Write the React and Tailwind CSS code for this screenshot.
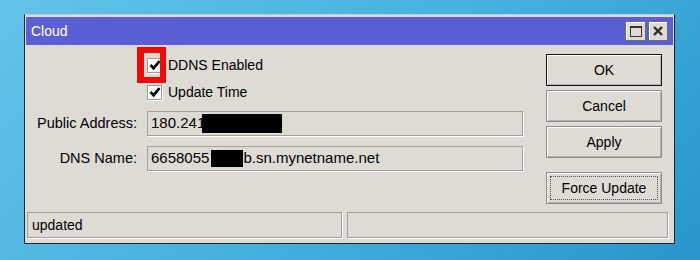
import React from "react";

const font = { fontFamily: '"Liberation Sans", Arial, sans-serif' };

function Check() {
  return (
    <svg width="12" height="12" viewBox="0 0 12 12">
      <path d="M1.5 6 L4.6 9.2 L10.5 2.2" fill="none" stroke="#000" strokeWidth="2.6" />
    </svg>
  );
}

function CheckBox() {
  return (
    <div className="w-[15px] h-[15px] bg-white border border-[#9c9a94] flex items-center justify-center shadow-[1px_1px_0_#fff]">
      <Check />
    </div>
  );
}

function Field({ children }) {
  return (
    <div className="ml-[10px] w-[376px] h-[25px] border border-[#a3a09a] shadow-[1px_1px_0_#fff] bg-[#dedbd4] flex items-center pl-[3px] text-[15px] text-black whitespace-nowrap">
      {children}
    </div>
  );
}

function Button({ label, isDefault, focused }) {
  return (
    <div
      className={
        "relative w-[116px] h-[32px] flex items-center justify-center text-[14px] text-black bg-[#dedbd4] shadow-[inset_1px_1px_0_#fff,inset_-1px_-1px_0_#b5b2ab] " +
        (isDefault ? "border border-[#141414]" : "border border-[#8e8c87]")
      }
    >
      {focused && (
        <div className="absolute inset-[3px] border border-dotted border-[#555]" />
      )}
      {label}
    </div>
  );
}

export default function App() {
  return (
    <div
      className="w-[700px] h-[260px] pt-[14px] pl-[24px] bg-[linear-gradient(135deg,#62c2ea_0%,#45b1df_50%,#2896cb_100%)] overflow-hidden"
      style={font}
    >
      <div className="w-[651px] h-[230px] border border-[#1c2430] border-t-[#c9c9c9] p-px bg-[#dedbd4] flex flex-col">
        {/* title bar */}
        <div className="mt-px h-[28px] bg-[#5b5fd6] flex items-center pl-[5px] pr-[5px]">
          <span className="text-white text-[14px] flex-1">Cloud</span>
          <div className="flex gap-[2px]">
            <div className="w-[21px] h-[20px] bg-[#dedbd4] border border-[#6f6d69] shadow-[inset_1px_1px_0_#fff] flex items-center justify-center">
              <div className="w-[12px] h-[11px] border border-[#333] border-t-2" />
            </div>
            <div className="w-[20px] h-[20px] bg-[#dedbd4] border border-[#6f6d69] shadow-[inset_1px_1px_0_#fff] flex items-center justify-center">
              <svg width="10" height="10" viewBox="0 0 10 10">
                <path d="M1 1 L9 9 M9 1 L1 9" stroke="#2a2a2a" strokeWidth="2.3" />
              </svg>
            </div>
          </div>
        </div>

        {/* body */}
        <div className="h-[167px] flex">
          <div className="flex-1 flex flex-col pt-[7px] text-[14px] text-black">
            <div className="h-[26px] flex items-center pl-[121px]">
              <div className="relative">
                <CheckBox />
                <div className="absolute left-[-10px] top-[-11px] w-[29px] h-[36px] border-[6px] border-l-[7px] border-[#f00a0a]" />
              </div>
              <span className="ml-[6px]">DDNS Enabled</span>
            </div>
            <div className="h-[28px] flex items-center pl-[121px]">
              <CheckBox />
              <span className="ml-[6px]">Update Time</span>
            </div>
            <div className="mt-[5px] flex items-center">
              <div className="w-[111px] text-right text-[14.5px]">Public Address:</div>
              <Field>
                <span>180.241</span>
                <span className="inline-block -ml-[3px] w-[80px] h-[19px] bg-black" />
              </Field>
            </div>
            <div className="mt-[10px] flex items-center">
              <div className="w-[111px] text-right text-[14.5px]">DNS Name:</div>
              <Field>
                <span>6658055</span>
                <span className="inline-block ml-[2px] w-[32px] h-[17px] bg-black" />
                <span>b.sn.mynetname.net</span>
              </Field>
            </div>
          </div>
          <div className="pt-[9px] pr-[11px] flex flex-col gap-[4px]">
            <Button label="OK" isDefault />
            <Button label="Cancel" />
            <Button label="Apply" />
            <div className="mt-[10px]">
              <Button label="Force Update" focused />
            </div>
          </div>
        </div>

        {/* status bar */}
        <div className="flex gap-[5px] pl-px pr-[5px]">
          <div className="w-[315px] h-[26px] border border-[#a3a09a] shadow-[1px_1px_0_#fff] flex items-center pl-[4px] text-[14px] text-black">
            updated
          </div>
          <div className="flex-1 h-[26px] border border-[#a3a09a] shadow-[1px_1px_0_#fff]" />
        </div>
      </div>
    </div>
  );
}
